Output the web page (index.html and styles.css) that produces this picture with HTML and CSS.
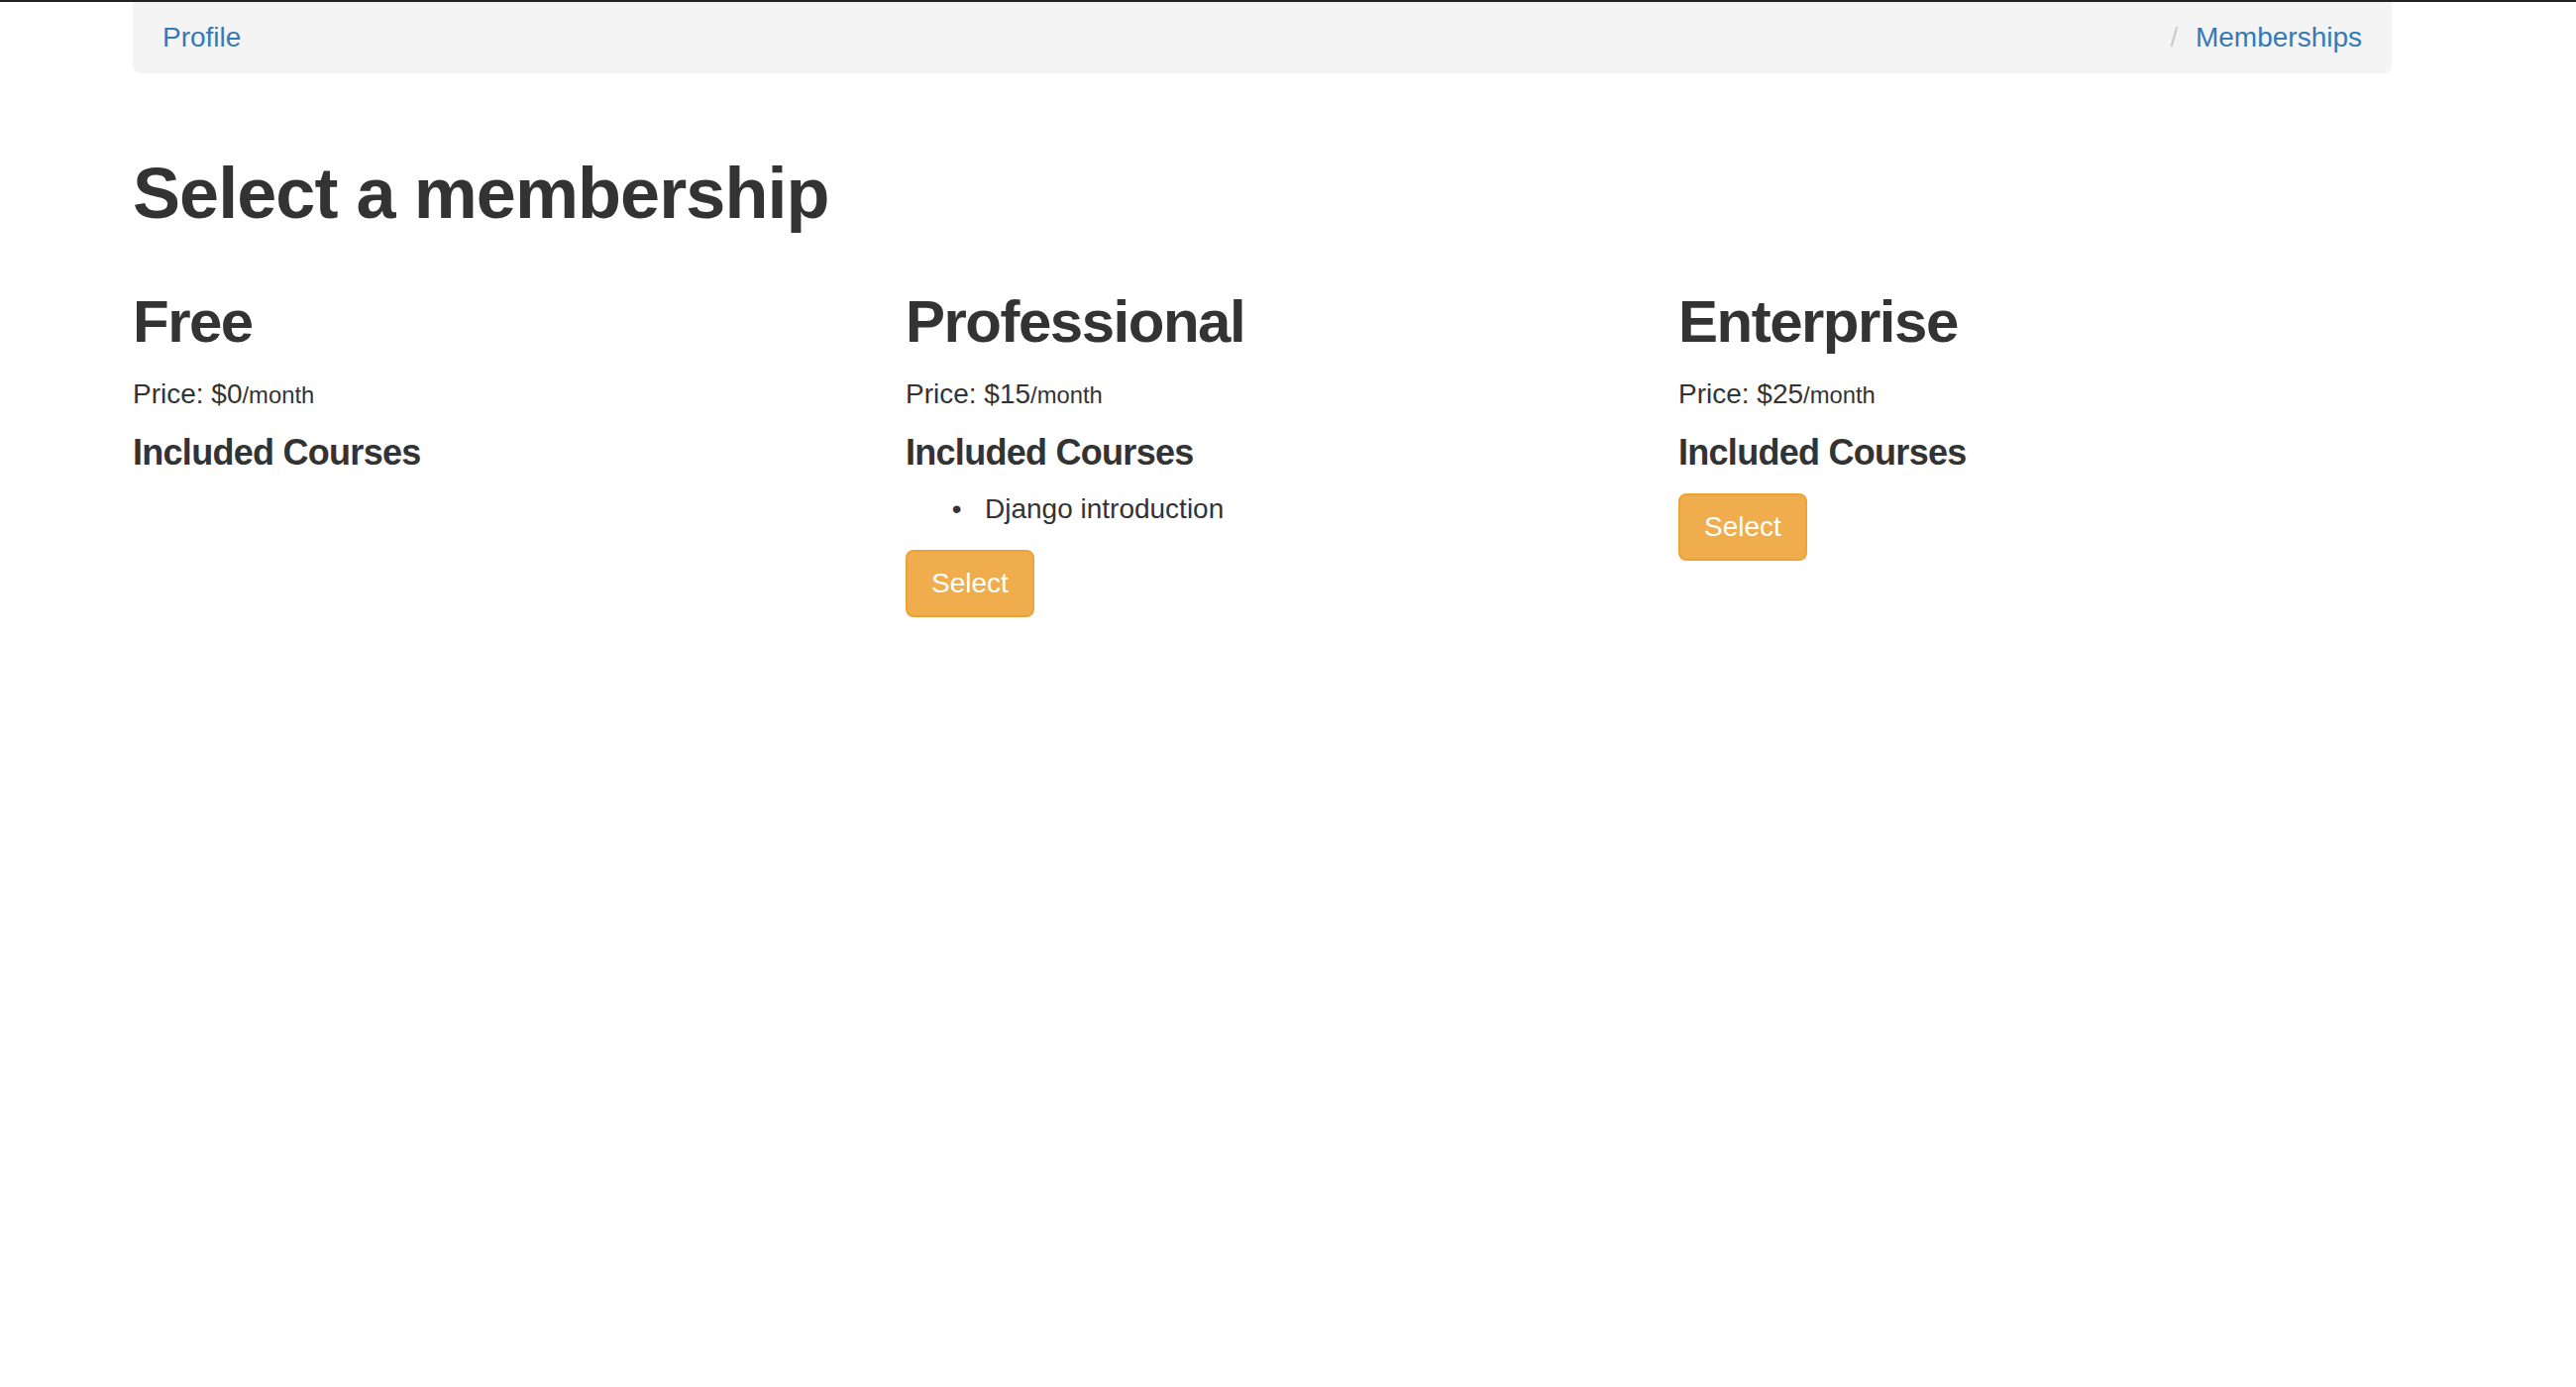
FILE: index.html
```html
<!DOCTYPE html>
<html lang="en">
<head>
<meta charset="utf-8">
<title>Select a membership</title>
<link rel="stylesheet" href="styles.css">
</head>
<body>
<div class="topbar"></div>
<div class="container">
  <ol class="breadcrumb">
    <li><a href="#">Profile</a></li>
    <li class="crumb-right"><a href="#">Memberships</a></li>
  </ol>
  <h1 class="page-title">Select a membership</h1>
  <div class="plans">
    <div class="plan">
      <h2 class="plan-name">Free</h2>
      <p class="price">Price: $0<small>/month</small></p>
      <h4 class="plan-sub">Included Courses</h4>
      <ul class="courses"></ul>
    </div>
    <div class="plan">
      <h2 class="plan-name">Professional</h2>
      <p class="price">Price: $15<small>/month</small></p>
      <h4 class="plan-sub">Included Courses</h4>
      <ul class="courses">
        <li>Django introduction</li>
      </ul>
      <button class="btn">Select</button>
    </div>
    <div class="plan">
      <h2 class="plan-name">Enterprise</h2>
      <p class="price">Price: $25<small>/month</small></p>
      <h4 class="plan-sub">Included Courses</h4>
      <ul class="courses"></ul>
      <button class="btn">Select</button>
    </div>
  </div>
</div>
</body>
</html>
```
FILE: styles.css
```css
html, body {
  background: #fff;
}
body {
  margin: 0;
  font-family: "Liberation Sans", Arial, sans-serif;
  font-size: 28px;
  line-height: 40px;
  color: #333;
}
a {
  color: #337ab7;
  text-decoration: none;
}
.topbar {
  height: 2px;
  background: #222;
}
.container {
  width: 2280px;
  margin-left: 134px;
}
.breadcrumb {
  display: flex;
  justify-content: space-between;
  list-style: none;
  margin: 0;
  padding: 16px 30px;
  background: #f4f4f4;
  border-radius: 0 0 8px 8px;
}
.crumb-right::before {
  content: "/\00a0";
  padding: 0 10px;
  color: #ccc;
}
.page-title {
  margin: 82px 0 20px;
  font-size: 72px;
  line-height: 79px;
  font-weight: bold;
  letter-spacing: -0.013em;
}
.plans {
  display: grid;
  grid-template-columns: repeat(3, 780px);
  align-items: start;
}
.plan-name {
  margin: 37px 0 20px;
  font-size: 60px;
  line-height: 66px;
  font-weight: bold;
  letter-spacing: -0.025em;
}
.price {
  margin: 0 0 18px;
}
.price small {
  font-size: 85%;
}
.plan-sub {
  margin: 18px 0 17px;
  font-size: 36px;
  line-height: 40px;
  font-weight: bold;
  letter-spacing: -0.02em;
}
.courses {
  margin: 0 0 21px;
  padding-left: 80px;
  list-style-type: "\2022\00a0\00a0\00a0";
}
.btn {
  display: inline-block;
  padding: 12px 24px;
  font-family: inherit;
  font-size: 28px;
  line-height: 40px;
  color: #fff;
  background: #f0ad4e;
  border: 2px solid #eea236;
  border-radius: 8px;
}
```
